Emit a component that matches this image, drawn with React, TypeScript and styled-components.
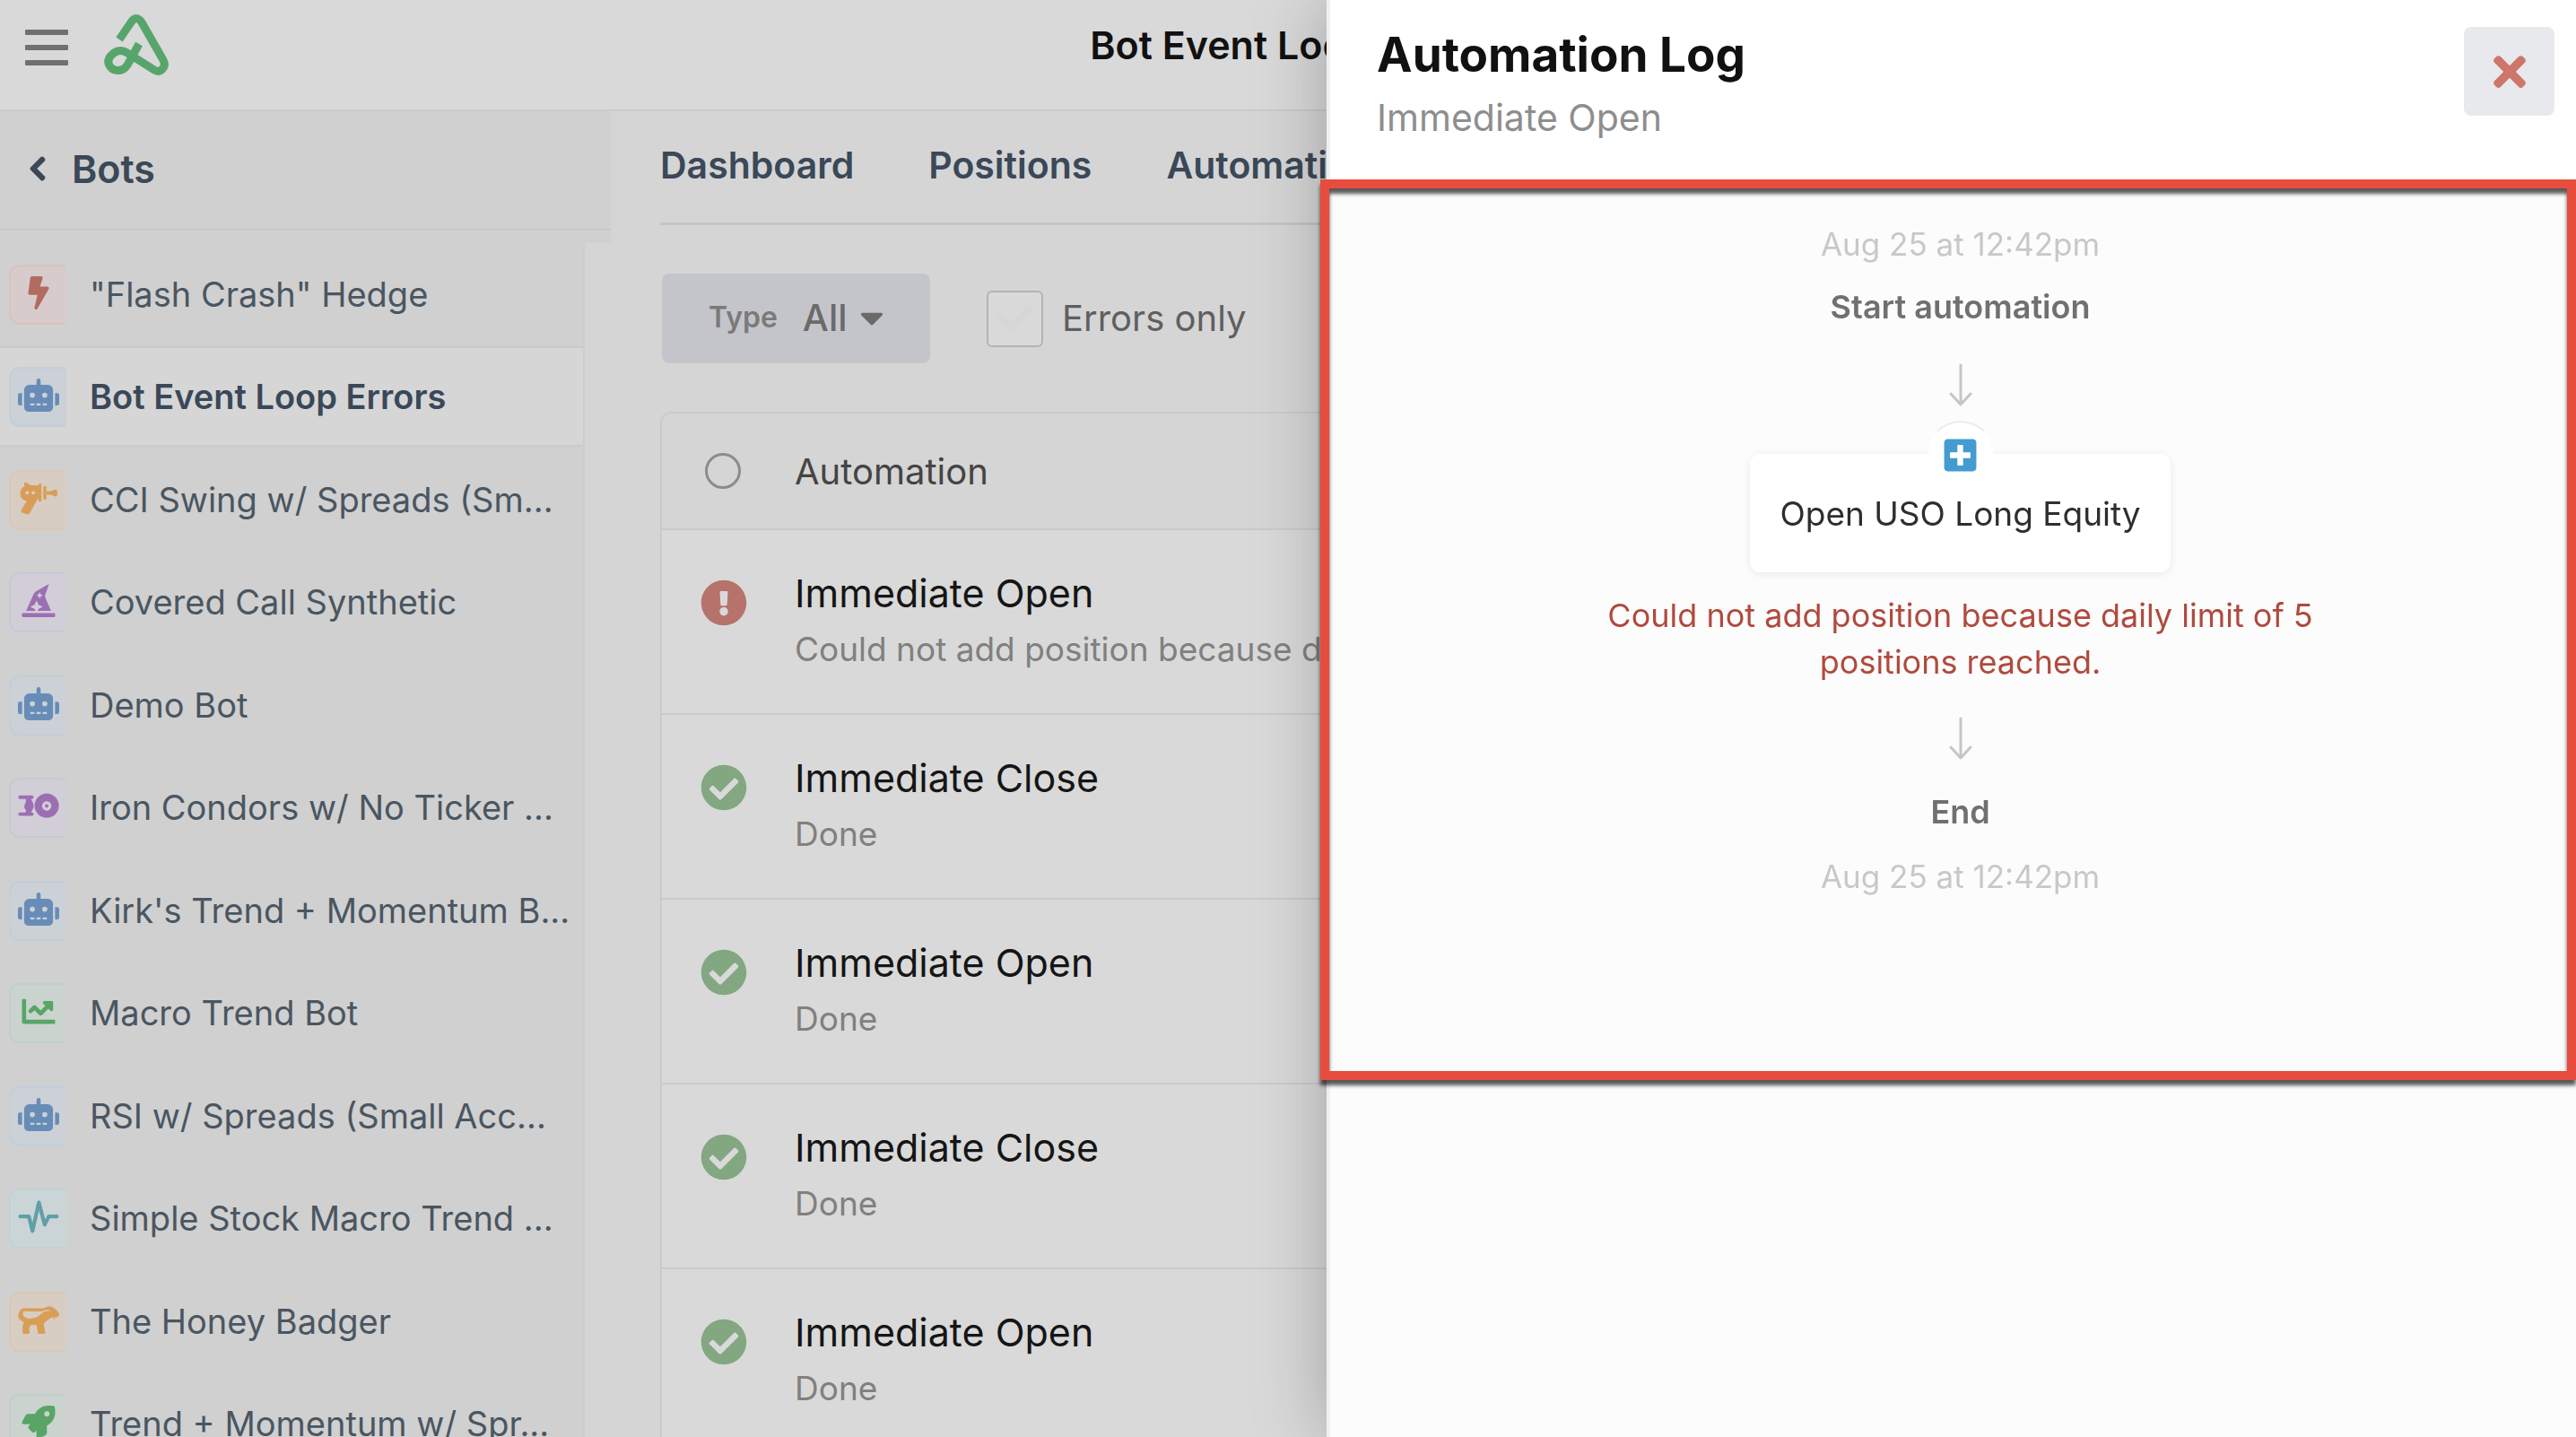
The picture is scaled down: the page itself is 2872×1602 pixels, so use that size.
import React from "react";
import styled, { createGlobalStyle, css } from "styled-components";
import {
  FaBolt,
  FaCaretDown,
  FaChartLine,
  FaCheck,
  FaCheckCircle,
  FaChevronLeft,
  FaExclamationCircle,
  FaHatWizard,
  FaPlusSquare,
  FaRobot,
  FaRocket,
  FaTimes,
} from "react-icons/fa";

const GlobalStyle = createGlobalStyle`
  *, *::before, *::after { box-sizing: border-box; }
  html, body { margin: 0; overflow: hidden; }
  body {
    background: #d5d5d5;
    font-family: Inter, "Liberation Sans", sans-serif;
    font-size: 36px;
  }
  button, select, input { font: inherit; color: inherit; }
  ul, ol, h1, h2, p { margin: 0; padding: 0; }
  ul, ol { list-style: none; }
  a { color: inherit; text-decoration: none; }
`;

/* ---------- page shell ---------- */

const Shell = styled.div`
  display: flex;
  flex-direction: column;
  height: 100vh;
  overflow: hidden;
`;

const TopBar = styled.header`
  display: grid;
  grid-template-columns: 1fr auto 1fr;
  align-items: start;
  flex: none;
  height: 124px;
  padding: 0 20px 0 28px;
  background: #d9d9d9;
  border-bottom: 2px solid #cacaca;
`;

const Brand = styled.div`
  display: flex;
  align-items: center;
  gap: 40px;
  padding-top: 16px;
`;

const MenuButton = styled.button`
  display: flex;
  flex-direction: column;
  gap: 11px;
  width: 48px;
  padding: 6px 0 0;
  border: 0;
  background: none;
`;

const MenuLine = styled.span`
  height: 6px;
  border-radius: 1px;
  background: #707070;
`;

const PageTitle = styled.h1`
  padding-top: 25px;
  font-size: 43px;
  font-weight: 600;
  line-height: 50px;
  color: #111;
`;

const Columns = styled.div`
  display: grid;
  grid-template-columns: 681px 1fr;
  flex: 1;
  min-height: 0;
`;

/* ---------- sidebar ---------- */

const Sidebar = styled.nav`
  display: flex;
  flex-direction: column;
  min-height: 0;
`;

const SidebarHead = styled.div`
  flex: none;
  padding-bottom: 14px;
  background: #d0d0d0;
`;

const BackLink = styled.a`
  display: flex;
  align-items: center;
  gap: 24px;
  height: 133px;
  padding: 0 28px 4px;
  border-bottom: 2px solid #c8c8c8;
  font-size: 43px;
  font-weight: 600;
  color: #3a4858;
`;

const BackIcon = styled(FaChevronLeft)`
  width: 28px;
  height: 30px;
  stroke: currentColor;
  stroke-width: 24px;
`;

const BotList = styled.ul`
  width: 652px;
  flex: 1;
  background: #d0d0d0;
  border-right: 2px solid #cdcdcd;
`;

const BotItem = styled.li`
  padding: 3px 0;

  &:nth-child(even) {
    margin-bottom: 1px;
  }
`;

const BotLink = styled.a<{ $active?: boolean }>`
  display: flex;
  align-items: center;
  gap: 26px;
  height: 108px;
  padding-left: 10px;
  font-size: 38px;
  white-space: nowrap;
  color: #4a5661;
  ${(p) =>
    p.$active &&
    css`
      background: #d6d6d6;
      box-shadow: 0 -2px #c9c9c9, 0 2px #c9c9c9;
      font-weight: 600;
      color: #3a4858;
    `}
`;

type Tone = "red" | "blue" | "orange" | "purple" | "green" | "teal";

const tones: Record<Tone, { ink: string; fill: string; edge: string }> = {
  red: { ink: "#b26b61", fill: "#d7cccb", edge: "#d8c3c1" },
  blue: { ink: "#688cb8", fill: "#cbd1d6", edge: "#c2ced8" },
  orange: { ink: "#d89e58", fill: "#d8cdc2", edge: "#dbc8b3" },
  purple: { ink: "#9c6fb3", fill: "#d2ced7", edge: "#ccc6d6" },
  green: { ink: "#58a566", fill: "#cbd3ce", edge: "#c0d0c8" },
  teal: { ink: "#619fa8", fill: "#cbd5d7", edge: "#c0d2d4" },
};

const Tile = styled.span<{ $tone: Tone }>`
  display: flex;
  align-items: center;
  justify-content: center;
  width: 64px;
  height: 67px;
  padding-bottom: 4px;
  border: 2px solid ${(p) => tones[p.$tone].edge};
  border-right: 0;
  border-radius: 12px 4px 4px 12px;
  background: ${(p) => tones[p.$tone].fill};
  color: ${(p) => tones[p.$tone].ink};

  svg {
    flex: none;
    width: 46px;
    height: 37px;
  }
`;

const RayGun = () => (
  <svg viewBox="66 82 130 114" fill="currentColor" aria-hidden="true">
    <path d="M82 86q4-4 9 0l14 8h26v-2q0-4 5-4t5 4v54q0 5-5 5t-5-5v-4h-4l-26 48q-3 6-10 4l-15-5q-7-3-4-10l18-31q-22-4-22-27 0-16 14-23z" />
    <rect x="147" y="97" width="11" height="47" rx="5" />
    <path d="M158 115h14l16-6q7-1 7 5v14q0 6-7 5l-16-6h-14z" />
    <circle cx="92" cy="120" r="6" fill="#d8cdc2" />
    <circle cx="113" cy="120" r="6" fill="#d8cdc2" />
  </svg>
);

const Starship = () => (
  <svg viewBox="59 1108 142 114" fill="currentColor" aria-hidden="true">
    <path
      fillRule="evenodd"
      d="M158 1122a42 42 0 1 0 .1 0zM158 1149a16 16 0 1 1-.1 0z"
    />
    <circle cx="158" cy="1165" r="6" />
    <path d="M60 1135q0-6 6-6h41q6 0 6 6t-6 6h-3l8 16q2 8 0 16l-8 14h3q6 0 6 6t-6 6H66q-6 0-6-6t6-6h20v-9q-7-4-5-13 2-10 5-11v-13H66q-6 0-6-6z" />
  </svg>
);

const Badger = () => (
  <svg viewBox="58 1092 142 114" fill="currentColor" aria-hidden="true">
    <path
      fillRule="evenodd"
      d="M74 1109h68q8 0 18-6 6-2 11 0 22 9 29 26 0 9-6 10l-8 1-2 9-5-9q-9 1-20 11-10 5-12 13l5 28q0 5-5 5h-16q-5 0-5-5l-4-25h-20l-6 10 3 14q0 6-6 6H79q-5 0-5-5v-21q4-10 4-15-15-6-19-18 0-20 15-29zM80 1117q-6 3-5 12 2 13 20 15 25 2 42-15 14-13 36-10-12-9-27-1-8 2-14 2H84z"
    />
  </svg>
);

const Pulse = () => (
  <svg
    viewBox="58 745 142 114"
    fill="none"
    stroke="currentColor"
    strokeWidth="13"
    strokeLinecap="round"
    strokeLinejoin="round"
    aria-hidden="true"
  >
    <path d="M66 801h30l12 50 22-98 20 76 14-28h28" />
  </svg>
);

const Logo = () => (
  <svg
    width="72"
    height="68"
    viewBox="0 0 72 68"
    fill="none"
    stroke="#58a56b"
    strokeWidth="9"
    strokeLinejoin="round"
    aria-label="Option Alpha"
    role="img"
  >
    <path d="M17 28 30 9q6-9 12 0l24 42q3 6-1 10-4 4-9 1L26 43Q18 38 11 43q-9 7-5 14 4 7 13 5 5-1 9-9l11-20" />
  </svg>
);

const bots: { name: string; tone: Tone; icon: React.ReactNode }[] = [
  { name: '"Flash Crash" Hedge', tone: "red", icon: <FaBolt /> },
  { name: "Bot Event Loop Errors", tone: "blue", icon: <FaRobot /> },
  { name: "CCI Swing w/ Spreads (Sm...", tone: "orange", icon: <RayGun /> },
  { name: "Covered Call Synthetic", tone: "purple", icon: <FaHatWizard /> },
  { name: "Demo Bot", tone: "blue", icon: <FaRobot /> },
  { name: "Iron Condors w/ No Ticker ...", tone: "purple", icon: <Starship /> },
  { name: "Kirk's Trend + Momentum B...", tone: "blue", icon: <FaRobot /> },
  { name: "Macro Trend Bot", tone: "green", icon: <FaChartLine /> },
  { name: "RSI w/ Spreads (Small Acc...", tone: "blue", icon: <FaRobot /> },
  { name: "Simple Stock Macro Trend ...", tone: "teal", icon: <Pulse /> },
  { name: "The Honey Badger", tone: "orange", icon: <Badger /> },
  { name: "Trend + Momentum w/ Spr...", tone: "green", icon: <FaRocket /> },
];

/* ---------- main column ---------- */

const Main = styled.main`
  min-width: 0;
  padding: 0 55px;
`;

const Tabs = styled.nav`
  display: flex;
  gap: 83px;
  height: 127px;
  padding-top: 36px;
  border-bottom: 3px solid #c4c4c4;
  font-size: 41px;
  font-weight: 600;
  line-height: 48px;
  color: #3a4858;
`;

const Filters = styled.div`
  display: flex;
  align-items: center;
  gap: 63px;
  padding: 54px 2px;
`;

const TypeFilter = styled.label`
  display: flex;
  align-items: center;
  gap: 28px;
  width: 299px;
  height: 100px;
  padding: 0 0 3px 52px;
  border-radius: 8px;
  background: #c4c5ca;
  font-size: 32px;
  font-weight: 600;
  color: #7a7a7a;
`;

const TypePicker = styled.span`
  display: flex;
  align-items: center;
  gap: 14px;
  font-size: 41px;
  font-weight: 500;
  color: #6a6a6a;
`;

const TypeSelect = styled.select`
  appearance: none;
  padding: 0;
  border: 0;
  background: none;
`;

const Caret = styled(FaCaretDown)`
  width: 26px;
  height: 42px;
`;

const ErrorsFilter = styled.label`
  display: flex;
  align-items: center;
  gap: 21px;
  font-size: 40px;
  line-height: 66px;
  color: #5f5f5f;
`;

const TickBox = styled.span`
  display: grid;
  width: 63px;
  height: 63px;
  border: 2px solid #b4b4b4;
  border-radius: 6px;
  background: #d9d9d9;
  color: #d6d6d6;

  > * {
    grid-area: 1 / 1;
    place-self: center;
  }
`;

const TickInput = styled.input`
  appearance: none;
  width: 100%;
  height: 100%;
  margin: 0;

  &:checked + svg {
    color: #5f5f5f;
  }
`;

const LogList = styled.section`
  border: 2px solid #cacaca;
  border-radius: 12px 12px 0 0;
`;

const LogHead = styled.div`
  display: grid;
  grid-template-columns: 100px 1fr;
  align-items: center;
  height: 128px;
  padding-left: 48px;
  font-size: 40px;
  color: #444;
`;

const SelectAll = styled.input`
  appearance: none;
  width: 40px;
  height: 40px;
  margin: 0;
  border: 3px solid #8c8c8c;
  border-radius: 50%;
`;

const LogRow = styled.li`
  display: grid;
  grid-template-columns: 105px 1fr;
  height: 206px;
  padding: 45px 0 0 43px;
  border-top: 2px solid #cacaca;
  background: #d9d9d9;
`;

const StatusIcon = styled.span<{ $failed?: boolean }>`
  padding-top: 10px;
  color: ${(p) => (p.$failed ? "#b5736b" : "#82a781")};

  svg {
    display: block;
    width: 52px;
    height: 52px;
  }
`;

const LogName = styled.h2`
  font-size: 43px;
  font-weight: 400;
  line-height: 50px;
  color: #151515;
`;

const LogNote = styled.p`
  padding-top: 14px;
  font-size: 37px;
  line-height: 48px;
  white-space: nowrap;
  color: #808080;
`;

const failure = "Could not add position because daily limit of 5 positions reached.";

const logs = [
  { name: "Immediate Open", note: failure, failed: true },
  { name: "Immediate Close", note: "Done" },
  { name: "Immediate Open", note: "Done" },
  { name: "Immediate Close", note: "Done" },
  { name: "Immediate Open", note: "Done" },
];

/* ---------- slide-over panel ---------- */

const Panel = styled.aside`
  position: fixed;
  top: 0;
  right: 0;
  bottom: 0;
  width: 48.5%;
  display: flex;
  flex-direction: column;
  background: #fcfcfc;
  border-left: 4px solid #f0f0f0;
  box-shadow: 0 0 76px rgba(0, 0, 0, 0.26);
`;

const PanelHead = styled.header`
  display: flex;
  justify-content: space-between;
  align-items: flex-start;
  flex: none;
  height: 200px;
  padding: 30px 24px 0 52px;
  background: #fff;
`;

const PanelTitle = styled.h2`
  font-size: 53px;
  font-weight: 700;
  line-height: 62px;
  color: #111;
`;

const PanelSubtitle = styled.p`
  padding-top: 14px;
  font-size: 41px;
  line-height: 50px;
  color: #8e8e8e;
`;

const CloseButton = styled.button`
  display: flex;
  align-items: center;
  justify-content: center;
  width: 101px;
  height: 99px;
  padding: 0;
  border: 0;
  border-radius: 8px;
  background: #e8e9ed;
  color: #cd7669;

  svg {
    width: 50px;
    height: 52px;
  }
`;

const PanelBody = styled.div`
  position: relative;
  height: 1004px;
  padding: 46px 0 0 16px;
`;

const Highlight = styled.div`
  position: absolute;
  inset: 0 0 0 -11px;
  border: 10px solid #e84c3d;
  filter: drop-shadow(0 6px 2px rgba(0, 0, 0, 0.65));
  pointer-events: none;
`;

const Flow = styled.ol`
  display: flex;
  flex-direction: column;
  align-items: center;
  line-height: 52px;
  text-align: center;
`;

const Stamp = styled.li`
  font-size: 35px;
  color: #c8c8c8;
`;

const Marker = styled.li`
  padding: 18px 0 20px;
  font-size: 36px;
  font-weight: 600;
  color: #707070;
`;

const ArrowItem = styled.li`
  height: 48px;
  margin: 17px 0 14px;

  svg {
    display: block;
  }
`;

const ActionCard = styled.li`
  position: relative;
  display: flex;
  flex-direction: column;
  align-items: center;
  margin-top: 39px;
  padding: 41px 33px 39px;
  border-radius: 12px;
  background: #fff;
  box-shadow: 0 2px 10px rgba(0, 0, 0, 0.08);
  font-size: 37px;
  color: #2e2e2e;
`;

const ActionBadge = styled.span`
  position: absolute;
  top: -37px;
  display: flex;
  align-items: center;
  justify-content: center;
  width: 76px;
  height: 76px;
  border-radius: 50%;
  background: linear-gradient(#fff, #fff) padding-box;
  border: 2px solid transparent;
  border-top-color: #ececec;
  color: #449bd0;

  svg {
    width: 41px;
    height: 41px;
  }
`;

const ErrorNote = styled.li`
  width: 800px;
  padding: 22px 0 18px;
  font-size: 36px;
  color: #b04a3e;
`;

const Arrow = () => (
  <ArrowItem aria-hidden="true">
    <svg width="28" height="48" viewBox="0 0 28 48" fill="none" stroke="#c6c6c6" strokeWidth="3" strokeLinecap="round" strokeLinejoin="round">
      <path d="M14 2v43M3 34l11 12 11-12" />
    </svg>
  </ArrowItem>
);

export default function App() {
  return (
    <>
      <GlobalStyle />
      <Shell>
        <TopBar>
          <Brand>
            <MenuButton type="button" aria-label="Menu">
              <MenuLine />
              <MenuLine />
              <MenuLine />
            </MenuButton>
            <Logo />
          </Brand>
          <PageTitle>Bot Event Loop Errors</PageTitle>
        </TopBar>
        <Columns>
          <Sidebar>
            <SidebarHead>
              <BackLink href="#bots">
                <BackIcon />
                Bots
              </BackLink>
            </SidebarHead>
            <BotList>
              {bots.map((bot, i) => (
                <BotItem key={bot.name}>
                  <BotLink href="#bot" $active={i === 1}>
                    <Tile $tone={bot.tone}>{bot.icon}</Tile>
                    {bot.name}
                  </BotLink>
                </BotItem>
              ))}
            </BotList>
          </Sidebar>
          <Main>
            <Tabs>
              <a href="#dashboard">Dashboard</a>
              <a href="#positions">Positions</a>
              <a href="#automations">Automations</a>
            </Tabs>
            <Filters>
              <TypeFilter>
                Type
                <TypePicker>
                  <TypeSelect defaultValue="All">
                    <option>All</option>
                  </TypeSelect>
                  <Caret />
                </TypePicker>
              </TypeFilter>
              <ErrorsFilter>
                <TickBox>
                  <TickInput type="checkbox" />
                  <FaCheck />
                </TickBox>
                Errors only
              </ErrorsFilter>
            </Filters>
            <LogList>
              <LogHead>
                <SelectAll type="radio" id="all-logs" />
                <label htmlFor="all-logs">Automation</label>
              </LogHead>
              <ul>
                {logs.map((log, i) => (
                  <LogRow key={i}>
                    <StatusIcon $failed={log.failed}>
                      {log.failed ? <FaExclamationCircle /> : <FaCheckCircle />}
                    </StatusIcon>
                    <div>
                      <LogName>{log.name}</LogName>
                      <LogNote>{log.note}</LogNote>
                    </div>
                  </LogRow>
                ))}
              </ul>
            </LogList>
          </Main>
        </Columns>
      </Shell>
      <Panel>
        <PanelHead>
          <div>
            <PanelTitle>Automation Log</PanelTitle>
            <PanelSubtitle>Immediate Open</PanelSubtitle>
          </div>
          <CloseButton type="button" aria-label="Close">
            <FaTimes />
          </CloseButton>
        </PanelHead>
        <PanelBody>
          <Flow>
            <Stamp>Aug 25 at 12:42pm</Stamp>
            <Marker>Start automation</Marker>
            <Arrow />
            <ActionCard>
              <ActionBadge>
                <FaPlusSquare />
              </ActionBadge>
              Open USO Long Equity
            </ActionCard>
            <ErrorNote>{failure}</ErrorNote>
            <Arrow />
            <Marker>End</Marker>
            <Stamp>Aug 25 at 12:42pm</Stamp>
          </Flow>
          <Highlight />
        </PanelBody>
      </Panel>
    </>
  );
}
